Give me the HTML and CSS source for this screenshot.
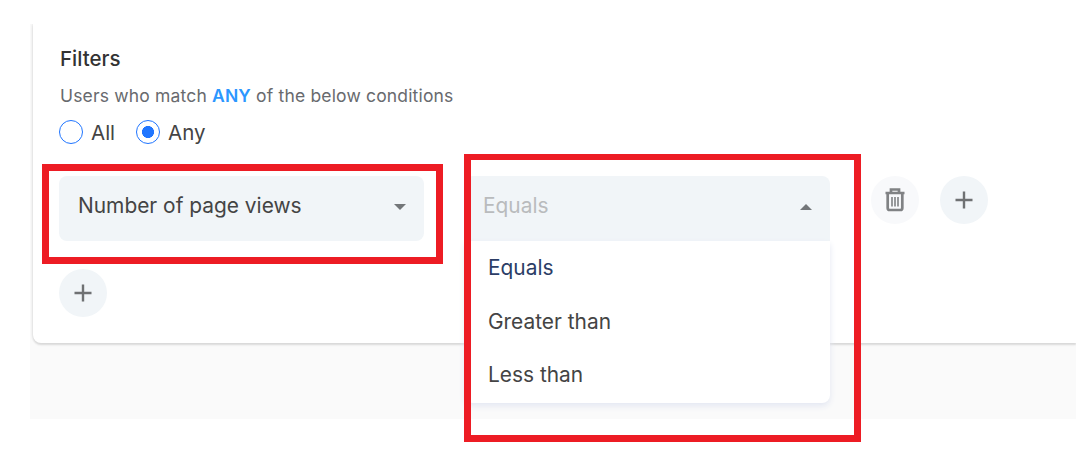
FILE: index.html
```html
<!DOCTYPE html>
<html lang="en">
<head>
<meta charset="utf-8">
<title>Filters</title>
<link rel="stylesheet" href="styles.css">
</head>
<body>
<main class="page">
  <section class="card">
    <h2 class="title">Filters</h2>
    <p class="hint">Users who match <strong class="hint-mode">ANY</strong> of the below conditions</p>
    <div class="radios">
      <div class="radio"><span class="dot"></span><span>All</span></div>
      <div class="radio"><span class="dot checked"></span><span>Any</span></div>
    </div>
    <div class="row">
      <div class="select">
        <span class="value">Number of page views</span>
        <svg class="caret" viewBox="0 0 12 6"><path d="M0 0H12L6 6Z"/></svg>
        <div class="mark mark-field"></div>
      </div>
      <div class="select open">
        <span class="value muted">Equals</span>
        <svg class="caret" viewBox="0 0 12 6"><path d="M0 6H12L6 0Z"/></svg>
        <div class="menu">
          <div class="option selected">Equals</div>
          <div class="option">Greater than</div>
          <div class="option">Less than</div>
        </div>
        <div class="mark mark-menu"></div>
      </div>
      <div class="actions">
        <div class="round faint">
          <svg class="trash" viewBox="0 0 20 24"><path d="M0.500 5H19.500M6 4V1.500H14V4M2.700 5V20Q2.700 22 4.700 22H15.300Q17.300 22 17.300 20V5" fill="none" stroke="#808284" stroke-width="2.700"/><path d="M7 9V18.500M10 9V18.500M13 9V18.500" fill="none" stroke="#97999b" stroke-width="2"/></svg>
        </div>
        <div class="round"><svg class="plus" viewBox="0 0 18 18"><path d="M9 0.500V17.500M0.500 9H17.500"/></svg></div>
      </div>
    </div>
    <div class="round add"><svg class="plus" viewBox="0 0 18 18"><path d="M9 0.500V17.500M0.500 9H17.500"/></svg></div>
  </section>
</main>
</body>
</html>
```
FILE: styles.css
```css
* { box-sizing: border-box; }
body {
  margin: 0;
  min-height: 471px;
  padding: 24px 2px 0 30px;
  background: #fff;
  font-family: Inter, "Liberation Sans", sans-serif;
  color: #444;
}
.page {
  height: 395px;
  padding-left: 3px;
  background: #fafafa;
}
.card {
  height: 319px;
  padding: 22px 0 0 26px;
  background: #fff;
  border-bottom-left-radius: 8px;
  box-shadow: 0 2px 2px #d9d9d9, -1px 0 2px #e8e8e8;
  clip-path: inset(0 0 -110px -3px);
}
.title {
  margin: 0 0 0 1px;
  font-size: 20.5px;
  font-weight: 450;
  line-height: 26px;
  color: #333;
}
.hint {
  margin: 12px 0 0 1px;
  font-size: 17.5px;
  line-height: 24px;
  letter-spacing: 0.17px;
  color: #686a6e;
  white-space: nowrap;
}
.hint-mode { font-weight: 600; color: #2c97ff; }
.radios { display: flex; gap: 21px; margin-top: 12px; }
.radio {
  display: flex;
  align-items: center;
  gap: 8px;
  height: 24px;
  font-size: 20.5px;
}
.dot {
  width: 24px;
  height: 24px;
  border: 1.5px solid #1f75ff;
  border-radius: 50%;
}
.checked { background: radial-gradient(circle, #2176ff 5.7px, #fff 6.3px); }
.row { display: flex; margin-top: 32px; }
.select {
  position: relative;
  display: flex;
  align-items: center;
  justify-content: space-between;
  width: 365px;
  height: 65px;
  margin-right: 41px;
  padding: 0 18px 6px 19px;
  border-radius: 8px;
  background: #f1f5f8;
  font-size: 20.9px;
}
.open { padding-left: 18px; border-radius: 8px 8px 0 0; }
.muted { color: #b9bbbd; }
.caret { width: 12px; height: 6px; margin-top: 3px; fill: #737679; }
.menu {
  position: absolute;
  top: 65px;
  left: 0;
  width: 365px;
  height: 162px;
  border-radius: 0 0 8px 8px;
  background: #fff;
  box-shadow: 0 3px 6px #e3e7f2;
}
.option {
  height: 53.7px;
  padding-left: 23px;
  line-height: 53px;
}
.selected { color: #2b3d66; }
.mark { position: absolute; border: 7px solid #ed1c24; }
.mark-field { left: -17px; top: -12px; width: 401px; height: 100px; }
.mark-menu { left: -1px; top: -22px; width: 397px; height: 288px; border-top-width: 6px; }
.actions { display: flex; gap: 21px; }
.round {
  display: grid;
  place-items: center;
  width: 48px;
  height: 48px;
  border-radius: 50%;
  background: #f1f5f8;
}
.faint { background: #f8f9fb; }
.add { margin-top: 28px; }
.plus { width: 18px; height: 18px; fill: none; stroke: #6f7173; stroke-width: 2.4; }
.trash { width: 20px; height: 24px; }
```
